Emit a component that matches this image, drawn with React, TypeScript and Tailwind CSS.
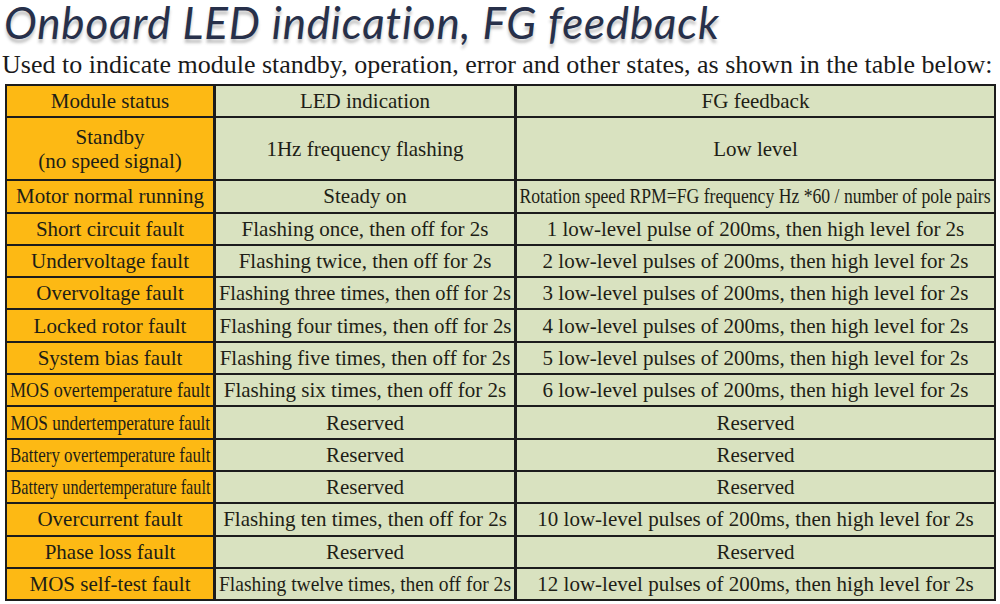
import { useLayoutEffect, useRef, useState } from "react";

type Row = { status: string; led: string; fg: string; tall?: boolean };

const rows: Row[] = [
  { status: "Standby\n(no speed signal)", led: "1Hz frequency flashing", fg: "Low level", tall: true },
  { status: "Motor normal running", led: "Steady on", fg: "Rotation speed RPM=FG frequency Hz *60 / number of pole pairs" },
  { status: "Short circuit fault", led: "Flashing once, then off for 2s", fg: "1 low-level pulse of 200ms, then high level for 2s" },
  { status: "Undervoltage fault", led: "Flashing twice, then off for 2s", fg: "2 low-level pulses of 200ms, then high level for 2s" },
  { status: "Overvoltage fault", led: "Flashing three times, then off for 2s", fg: "3 low-level pulses of 200ms, then high level for 2s" },
  { status: "Locked rotor fault", led: "Flashing four times, then off for 2s", fg: "4 low-level pulses of 200ms, then high level for 2s" },
  { status: "System bias fault", led: "Flashing five times, then off for 2s", fg: "5 low-level pulses of 200ms, then high level for 2s" },
  { status: "MOS overtemperature fault", led: "Flashing six times, then off for 2s", fg: "6 low-level pulses of 200ms, then high level for 2s" },
  { status: "MOS undertemperature fault", led: "Reserved", fg: "Reserved" },
  { status: "Battery overtemperature fault", led: "Reserved", fg: "Reserved" },
  { status: "Battery undertemperature fault", led: "Reserved", fg: "Reserved" },
  { status: "Overcurrent fault", led: "Flashing ten times, then off for 2s", fg: "10 low-level pulses of 200ms, then high level for 2s" },
  { status: "Phase loss fault", led: "Reserved", fg: "Reserved" },
  { status: "MOS self-test fault", led: "Flashing twelve times, then off for 2s", fg: "12 low-level pulses of 200ms, then high level for 2s" },
];

// squeeze text horizontally when it is wider than its cell, like the source image does
function FitText({ children }: { children: React.ReactNode }) {
  const ref = useRef<HTMLSpanElement>(null);
  const [scale, setScale] = useState(1);

  useLayoutEffect(() => {
    const el = ref.current;
    if (!el || !el.parentElement) return;
    const room = el.parentElement.clientWidth - 6;
    const w = el.offsetWidth;
    setScale(w > room ? room / w : 1);
  }, [children]);

  return (
    <span ref={ref} className="inline-block shrink-0" style={{ transform: `scaleX(${scale})` }}>
      {children}
    </span>
  );
}

function Cell({ children, orange, tall }: { children: React.ReactNode; orange?: boolean; tall?: boolean }) {
  return (
    <div
      className={`flex items-center justify-center overflow-hidden whitespace-pre text-center text-[21px] text-[#1e1e16] ${
        orange ? "bg-[#fdb914]" : "bg-[#d9e2c0]"
      } ${tall ? "h-[61px] leading-[24px]" : "h-[30.3px] leading-[30px]"}`}
    >
      <FitText>{children}</FitText>
    </div>
  );
}

export default function App() {
  return (
    <div className="h-[604px] w-[1000px] overflow-hidden bg-white font-['Liberation_Serif','DejaVu_Serif',serif]">
      <h1 className="ml-[4px] h-[44px] whitespace-nowrap font-['Lato','DejaVu_Sans',sans-serif] text-[44px] italic leading-[44px] tracking-[0.8px] text-[#27304a] [text-shadow:0_4px_3px_rgba(60,60,60,0.3)]">
        Onboard LED indication, FG feedback
      </h1>
      <p className="ml-[2px] mt-[6px] text-[26px] leading-[30px] text-[#1a1a1a]">
        Used to indicate module standby, operation, error and other states, as shown in the table below:
      </p>
      <div className="ml-[5px] mt-[4px] grid w-[991px] grid-cols-[206px_298px_1fr] gap-x-[3px] gap-y-[2px] border-2 border-[#1c1c1c] bg-[#1c1c1c]">
        <Cell orange>Module status</Cell>
        <Cell>LED indication</Cell>
        <Cell>FG feedback</Cell>
        {rows.map((r) => (
          <TableRow key={r.status} r={r} />
        ))}
      </div>
    </div>
  );
}

function TableRow({ r }: { r: Row }) {
  return (
    <>
      <Cell orange tall={r.tall}>
        {r.status}
      </Cell>
      <Cell tall={r.tall}>{r.led}</Cell>
      <Cell tall={r.tall}>{r.fg}</Cell>
    </>
  );
}
